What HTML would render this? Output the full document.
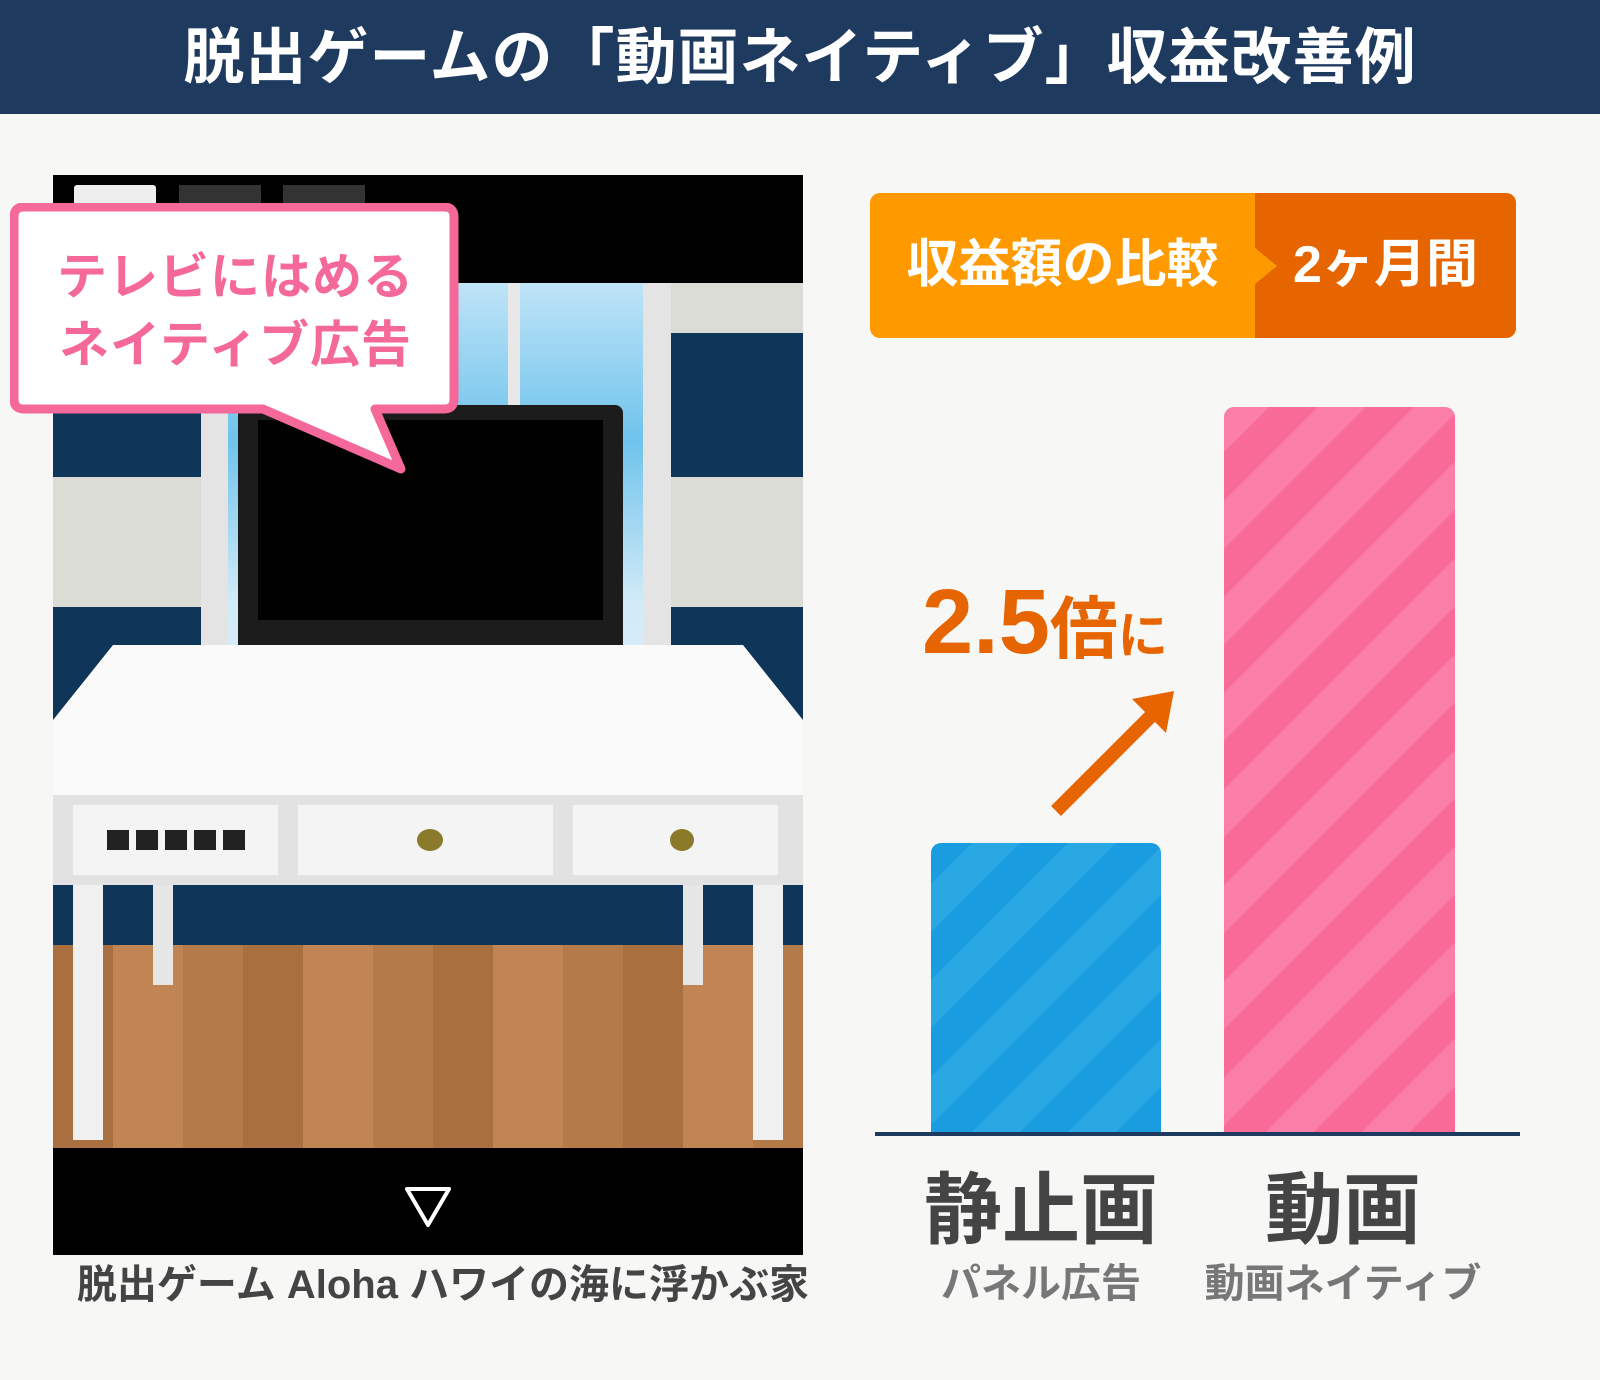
<!DOCTYPE html>
<html><head><meta charset="utf-8"><style>
*{margin:0;padding:0;box-sizing:border-box}
body{width:1600px;height:1380px;background:#f7f7f5;position:relative;overflow:hidden;font-family:"Liberation Sans","Noto Sans CJK JP",sans-serif;font-weight:700}
.a{position:absolute}
.hdr{left:0;top:0;width:1600px;height:114px;background:#1f3a5f;color:#fff;font-size:61px;text-align:center;line-height:114px;letter-spacing:1px}
.stripes-b{background:repeating-linear-gradient(-45deg,#1a9de0 0 34px,#2aa8e3 34px 68px)}
.stripes-p{background:repeating-linear-gradient(-45deg,#f86a98 0 34px,#fa7ea7 34px 68px)}
</style></head><body>
<div class="a hdr">脱出ゲームの「動画ネイティブ」収益改善例</div>

<!-- game screenshot -->
<div class="a" style="left:53px;top:175px;width:750px;height:1080px;background:#000;overflow:hidden">
  <div class="a" style="left:21px;top:10px;width:82px;height:24px;background:#eee;border-radius:3px"></div>
  <div class="a" style="left:126px;top:10px;width:82px;height:24px;background:#333"></div>
  <div class="a" style="left:230px;top:10px;width:82px;height:24px;background:#333"></div>
  <!-- wall -->
  <div class="a" style="left:0;top:108px;width:750px;height:865px;background:#0f3558"></div>
  <div class="a" style="left:0;top:302px;width:750px;height:130px;background:#dcdcd6"></div>
  <div class="a" style="left:0;top:108px;width:750px;height:50px;background:#dcdcd6"></div>
  <!-- window -->
  <div class="a" style="left:148px;top:108px;width:470px;height:545px;background:#e4e4e4"></div>
  <div class="a" style="left:175px;top:108px;width:415px;height:525px;background:linear-gradient(#bfe4f7,#6fc3ec 30%,#cfeaf7 60%,#eef6fa)"></div>
  <div class="a" style="left:455px;top:108px;width:12px;height:525px;background:#e8e8e8"></div>
  <!-- floor -->
  <div class="a" style="left:0;top:770px;width:750px;height:203px;background:repeating-linear-gradient(90deg,#a96f3f 0 60px,#c08552 60px 130px,#b47a48 130px 190px)"></div>
  <!-- monitor -->
  <div class="a" style="left:185px;top:230px;width:385px;height:248px;background:#1c1c1c;border-radius:8px"></div>
  <div class="a" style="left:205px;top:245px;width:345px;height:200px;background:#000"></div>
  <div class="a" style="left:325px;top:478px;width:100px;height:60px;background:#1e2a36;clip-path:polygon(20% 0,80% 0,100% 100%,0 100%)"></div>
  <!-- desk -->
  <div class="a" style="left:0;top:470px;width:750px;height:150px;background:#fafafa;clip-path:polygon(8% 0,92% 0,100% 50%,100% 100%,0 100%,0 50%)"></div>
  <div class="a" style="left:0;top:620px;width:750px;height:90px;background:#e2e2e2"></div>
  <div class="a" style="left:20px;top:630px;width:205px;height:70px;background:#f4f4f4"></div>
  <div class="a" style="left:245px;top:630px;width:255px;height:70px;background:#f4f4f4"></div>
  <div class="a" style="left:520px;top:630px;width:205px;height:70px;background:#f4f4f4"></div>
  <div class="a" style="left:54px;top:655px;width:138px;height:20px;background:repeating-linear-gradient(90deg,#222 0 22px,transparent 22px 29px)"></div>
  <div class="a" style="left:364px;top:654px;width:26px;height:22px;border-radius:50%;background:#8a7a2a"></div>
  <div class="a" style="left:617px;top:654px;width:24px;height:22px;border-radius:50%;background:#8a7a2a"></div>
  <div class="a" style="left:20px;top:710px;width:30px;height:255px;background:#f0f0f0"></div>
  <div class="a" style="left:700px;top:710px;width:30px;height:255px;background:#f0f0f0"></div>
  <div class="a" style="left:100px;top:710px;width:20px;height:100px;background:#e6e6e6"></div>
  <div class="a" style="left:630px;top:710px;width:20px;height:100px;background:#e6e6e6"></div>
  <div class="a" style="left:0;top:973px;width:750px;height:107px;background:#000"></div>
  <svg class="a" style="left:350px;top:1010px" width="50" height="45"><path d="M4 4 H46 L25 40 Z" fill="none" stroke="#fff" stroke-width="4" stroke-linejoin="round"/></svg>
</div>

<!-- callout -->
<svg class="a" style="left:10px;top:203px" width="450" height="275">
<path d="M14 4 H434 Q444 4 444 14 V196 Q444 206 434 206 H365 L391 266 L253 206 H14 Q4 206 4 196 V14 Q4 4 14 4 Z" fill="#fff" stroke="#f4689a" stroke-width="9" stroke-linejoin="round"/>
</svg>
<div class="a" style="left:10px;top:243px;width:451px;text-align:center;color:#f4689a;font-size:50px;line-height:68px;letter-spacing:1px">テレビにはめる<br>ネイティブ広告</div>

<div class="a" style="left:53px;top:1260px;width:780px;text-align:center;color:#444;font-size:40px;line-height:50px">脱出ゲーム Aloha ハワイの海に浮かぶ家</div>

<!-- orange box -->
<div class="a" style="left:870px;top:193px;width:646px;height:145px;border-radius:10px;overflow:hidden;background:#fe9a00">
  <div class="a" style="left:385px;top:0;width:261px;height:145px;background:#e76500"></div>
  <div class="a" style="left:385px;top:55px;width:0;height:0;border-top:18px solid transparent;border-bottom:18px solid transparent;border-left:22px solid #fe9a00"></div>
  <div class="a" style="left:0;top:0;width:385px;line-height:145px;text-align:center;color:#fff;font-size:52px">収益額の比較</div>
  <div class="a" style="left:385px;top:0;width:261px;line-height:145px;text-align:center;color:#fff;font-size:52px">2ヶ月間</div>
</div>

<!-- bars -->
<div class="a stripes-b" style="left:931px;top:843px;width:230px;height:292px;border-radius:10px 10px 0 0"></div>
<div class="a stripes-p" style="left:1224px;top:407px;width:231px;height:728px;border-radius:10px 10px 0 0"></div>
<div class="a" style="left:875px;top:1132px;width:645px;height:4px;background:#1f3a5f"></div>

<div class="a" style="left:922px;top:572px;color:#e76500;font-size:92px;line-height:100px;white-space:nowrap">2.5<span style="font-size:68px">倍</span><span style="font-size:50px">に</span></div>
<svg class="a" style="left:1040px;top:685px" width="150" height="140"><path d="M16 126 L118 24" stroke="#e76500" stroke-width="14"/><path d="M92 14 L134 6 L126 48 Z" fill="#e76500"/></svg>

<div class="a" style="left:900px;top:1160px;width:282px;text-align:center;color:#444;font-size:78px;line-height:100px">静止画</div>
<div class="a" style="left:900px;top:1258px;width:282px;text-align:center;color:#777;font-size:40px;line-height:52px">パネル広告</div>
<div class="a" style="left:1190px;top:1160px;width:306px;text-align:center;color:#444;font-size:78px;line-height:100px">動画</div>
<div class="a" style="left:1180px;top:1258px;width:326px;text-align:center;color:#777;font-size:40px;line-height:52px">動画ネイティブ</div>
</body></html>
